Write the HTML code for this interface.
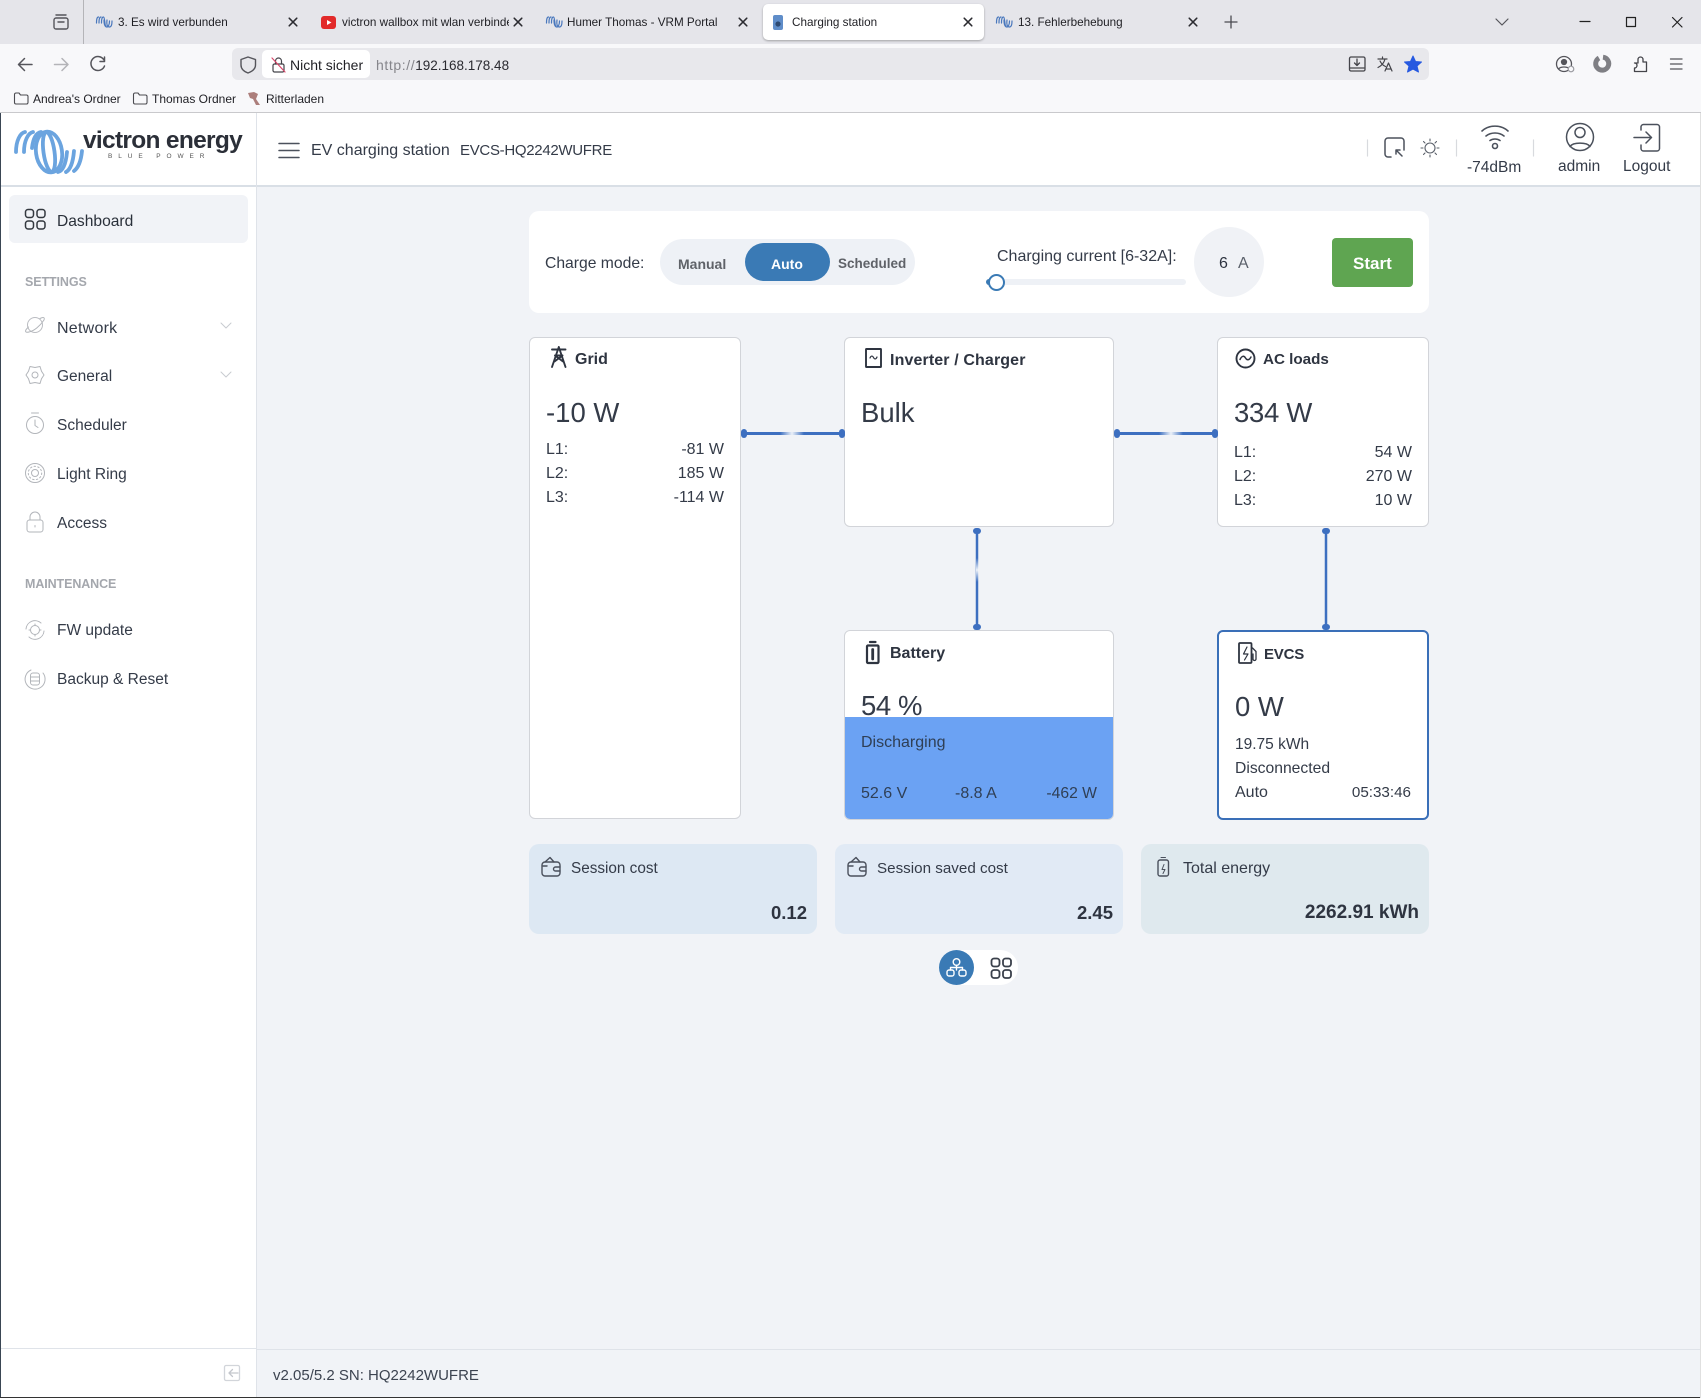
<!DOCTYPE html>
<html lang="de"><head><meta charset="utf-8"><title>Charging station</title>
<style>
*{box-sizing:border-box}
html,body{margin:0;padding:0;width:1701px;height:1398px;overflow:hidden;background:#f1f3f7;font-family:"Liberation Sans",sans-serif;color:#343b48}
.b{position:absolute}
.t{position:absolute;white-space:nowrap;line-height:20px;margin-top:-9px;font-size:16px}
.r{text-align:right}
.tab{font-size:11.7px;color:#1f1f24}
.bm{font-size:12px;color:#1f1f24}
.card{position:absolute;background:#fff;border:1px solid #d2d4d9;border-radius:6px}
.ttl{font-weight:700;color:#2e3440}
.big{font-size:27.5px;line-height:36px;margin-top:-17px;color:#343b48}
.sec{font-size:12.5px;font-weight:700;color:#a4a7ad}
svg{position:absolute;left:0;top:0;overflow:visible}
</style></head><body>

<!-- browser chrome -->
<div class="b" style="left:0;top:0;width:1701px;height:44px;background:#e5e5ea"></div>
<div class="b" style="left:0;top:44px;width:1701px;height:68px;background:#f8f8fa"></div>
<div class="b" style="left:0;top:112px;width:1701px;height:1px;background:#c9c9cc"></div>
<div class="b" style="left:83px;top:0;width:1px;height:44px;background:#b4b4b8"></div>
<div class="b" style="left:763px;top:4px;width:221px;height:36px;background:#fff;border-radius:5px;box-shadow:0 1px 2px rgba(0,0,0,.3)"></div>
<div class="b" style="left:232px;top:48px;width:1197px;height:32px;background:#e8e8ec;border-radius:6px"></div>
<div class="b" style="left:262px;top:50px;width:108px;height:28px;background:#fff;border-radius:5px"></div>

<div class="t tab" style="left:118px;top:22px">3. Es wird verbunden</div>
<div class="t tab" style="left:342px;top:22px;width:167px;overflow:hidden">victron wallbox mit wlan verbinden</div>
<div class="t tab" style="left:567px;top:22px">Humer Thomas - VRM Portal</div>
<div class="t tab" style="left:792px;top:22px">Charging station</div>
<div class="t tab" style="left:1018px;top:22px">13. Fehlerbehebung</div>
<div class="t" style="left:290px;top:64px;font-size:14px;color:#1f1f24">Nicht sicher</div>
<div class="t" style="left:376px;top:64px;font-size:14px;color:#85858b"><span style="letter-spacing:.6px">http://</span><span style="color:#2a2a30;font-size:13.5px">192.168.178.48</span></div>
<div class="t bm" style="left:33px;top:98px">Andrea's Ordner</div>
<div class="t bm" style="left:152px;top:98px">Thomas Ordner</div>
<div class="t bm" style="left:266px;top:98px">Ritterladen</div>

<!-- page frame -->
<div class="b" style="left:0;top:113px;width:256px;height:1285px;background:#fff"></div>
<div class="b" style="left:0;top:113px;width:1701px;height:72px;background:#fff"></div>
<div class="b" style="left:0;top:185px;width:1701px;height:2px;background:#d9dfe6"></div>
<div class="b" style="left:256px;top:113px;width:1px;height:1285px;background:#dfe3e9"></div>
<div class="b" style="left:0;top:1348px;width:256px;height:1px;background:#dfe3e9"></div>
<div class="b" style="left:257px;top:1349px;width:1444px;height:1px;background:#dfe3e9"></div>
<div class="b" style="left:0;top:113px;width:1px;height:1285px;background:#3a4654"></div>
<div class="b" style="left:0;top:1397px;width:1701px;height:1px;background:#333"></div>
<div class="b" style="left:1700px;top:113px;width:1px;height:1285px;background:#e0e0e0"></div>

<!-- logo text -->
<div class="t" style="left:83px;top:141px;font-size:24.5px;font-weight:700;color:#2b2f38;letter-spacing:-.7px;line-height:28px;margin-top:-14px">victron energy</div>
<div class="t" style="left:108px;top:157px;font-size:6.5px;line-height:8px;margin-top:-4px;letter-spacing:5.9px;color:#555">BLUE POWER</div>

<!-- header text -->
<div class="t" style="left:311px;top:150px">EV charging station</div>
<div class="t" style="left:460px;top:150px;font-size:15px;letter-spacing:-.3px">EVCS-HQ2242WUFRE</div>
<div class="t" style="left:1467px;top:167px;font-size:15.5px">-74dBm</div>
<div class="t" style="left:1558px;top:166px;font-size:15.5px">admin</div>
<div class="t" style="left:1623px;top:166px;font-size:15.5px">Logout</div>

<!-- sidebar -->
<div class="b" style="left:9px;top:195px;width:239px;height:48px;background:#f1f3f7;border-radius:6px"></div>
<div class="t" style="left:57px;top:221px;color:#2a303a;font-size:15.6px">Dashboard</div>
<div class="t sec" style="left:25px;top:281px;letter-spacing:-.1px">SETTINGS</div>
<div class="t" style="left:57px;top:327.500px;letter-spacing:.25px">Network</div>
<div class="t" style="left:57px;top:376px;font-size:15.500px">General</div>
<div class="t" style="left:57px;top:425px;font-size:15.500px">Scheduler</div>
<div class="t" style="left:57px;top:474px;font-size:15.500px">Light Ring</div>
<div class="t" style="left:57px;top:522.500px;font-size:15.500px">Access</div>
<div class="t sec" style="left:25px;top:583px;letter-spacing:-.1px">MAINTENANCE</div>
<div class="t" style="left:57px;top:630px;font-size:15.500px">FW update</div>
<div class="t" style="left:57px;top:679px;font-size:15.500px">Backup &amp; Reset</div>

<!-- top panel -->
<div class="b" style="left:529px;top:211px;width:900px;height:102px;background:#fff;border-radius:10px"></div>
<div class="t" style="left:545px;top:263px;font-size:15.700px">Charge mode:</div>
<div class="b" style="left:660px;top:239px;width:255px;height:46px;background:#eef1f6;border-radius:23px"></div>
<div class="b" style="left:745px;top:243px;width:85px;height:38px;background:#3a7ab5;border-radius:19px"></div>
<div class="t" style="left:678px;top:263px;font-size:14px;font-weight:700;color:#5f6268">Manual</div>
<div class="t" style="left:771px;top:263px;font-size:14px;font-weight:700;color:#fff">Auto</div>
<div class="t" style="left:838px;top:263px;font-size:13.500px;font-weight:700;color:#5f6268">Scheduled</div>
<div class="t" style="left:997px;top:256px">Charging current [6-32A]:</div>
<div class="b" style="left:986px;top:279px;width:200px;height:6px;background:#eef1f6;border-radius:3px"></div>
<div class="b" style="left:986px;top:279px;width:10px;height:6px;background:#3a7ab5;border-radius:3px"></div>
<div class="b" style="left:988px;top:274px;width:17px;height:17px;background:#fff;border:2.5px solid #3a7ab5;border-radius:50%"></div>
<div class="b" style="left:1194px;top:227px;width:70px;height:70px;background:#f0f2f6;border-radius:50%"></div>
<div class="t" style="left:1219px;top:263px;color:#2e3440">6</div>
<div class="t" style="left:1238px;top:263px;color:#5a606a">A</div>
<div class="b" style="left:1332px;top:238px;width:81px;height:49px;background:#5fa551;border-radius:4px"></div>
<div class="t" style="left:1353px;top:263px;font-size:17px;font-weight:700;color:#fff">Start</div>

<!-- flow cards -->
<div class="card" style="left:529px;top:337px;width:212px;height:482px"></div>
<div class="t ttl" style="left:575px;top:359px">Grid</div>
<div class="t big" style="left:546px;top:412px">-10 W</div>
<div class="t" style="left:546px;top:449px">L1:</div><div class="t r" style="right:977px;top:449px">-81 W</div>
<div class="t" style="left:546px;top:473px">L2:</div><div class="t r" style="right:977px;top:473px">185 W</div>
<div class="t" style="left:546px;top:497px">L3:</div><div class="t r" style="right:977px;top:497px">-114 W</div>

<div class="card" style="left:844px;top:337px;width:270px;height:190px"></div>
<div class="t ttl" style="left:890px;top:360px;letter-spacing:.12px">Inverter / Charger</div>
<div class="t big" style="left:861px;top:412px">Bulk</div>

<div class="card" style="left:1217px;top:337px;width:212px;height:190px"></div>
<div class="t ttl" style="left:1263px;top:359px;font-size:15.200px">AC loads</div>
<div class="t big" style="left:1234px;top:412px;letter-spacing:-.3px">334 W</div>
<div class="t" style="left:1234px;top:452px">L1:</div><div class="t r" style="right:289px;top:452px">54 W</div>
<div class="t" style="left:1234px;top:476px">L2:</div><div class="t r" style="right:289px;top:476px">270 W</div>
<div class="t" style="left:1234px;top:500px">L3:</div><div class="t r" style="right:289px;top:500px">10 W</div>

<div class="card" style="left:844px;top:630px;width:270px;height:190px;overflow:hidden"><div class="b" style="left:0;top:86px;width:268px;height:103px;background:#6ba2f3"></div></div>
<div class="t ttl" style="left:890px;top:653px">Battery</div>
<div class="t big" style="left:861px;top:705px;letter-spacing:-.4px">54 %</div>
<div class="t" style="left:861px;top:742px;color:#2f3f55">Discharging</div>
<div class="t" style="left:861px;top:793px;color:#2f3f55">52.6 V</div>
<div class="t" style="left:955px;top:793px;color:#2f3f55">-8.8 A</div>
<div class="t r" style="right:604px;top:793px;color:#2f3f55;font-size:15.700px">-462 W</div>

<div class="card" style="left:1217px;top:630px;width:212px;height:190px;border:2px solid #3a6fb8"></div>
<div class="t ttl" style="left:1264px;top:654px;font-size:15px;letter-spacing:-.2px">EVCS</div>
<div class="t big" style="left:1235px;top:706px">0 W</div>
<div class="t" style="left:1235px;top:744px;font-size:15.500px">19.75 kWh</div>
<div class="t" style="left:1235px;top:768px;font-size:15.700px">Disconnected</div>
<div class="t" style="left:1235px;top:792px">Auto</div>
<div class="t r" style="right:290px;top:792px;font-size:15.200px">05:33:46</div>

<!-- stat cards -->
<div class="b" style="left:529px;top:844px;width:288px;height:90px;background:#dde8f3;border-radius:10px"></div>
<div class="b" style="left:835px;top:844px;width:288px;height:90px;background:#e1eaf5;border-radius:10px"></div>
<div class="b" style="left:1141px;top:844px;width:288px;height:90px;background:#dfe9ee;border-radius:10px"></div>
<div class="t" style="left:571px;top:868px;font-size:15.300px">Session cost</div>
<div class="t" style="left:877px;top:868px;font-size:15.200px">Session saved cost</div>
<div class="t" style="left:1183px;top:868px">Total energy</div>
<div class="t r" style="right:894px;top:912px;font-size:18.500px;font-weight:700;color:#2e3440">0.12</div>
<div class="t r" style="right:588px;top:912px;font-size:18.500px;font-weight:700;color:#2e3440">2.45</div>
<div class="t r" style="right:282px;top:912px;font-size:19px;font-weight:700;color:#2e3440">2262.91 kWh</div>

<!-- toggle -->
<div class="b" style="left:939px;top:950px;width:79px;height:35px;background:#fff;border-radius:18px"></div>
<div class="b" style="left:939px;top:950px;width:35px;height:35px;background:#3a7ab5;border-radius:50%"></div>

<div class="t" style="left:273px;top:1375px;color:#3c4350;font-size:15px">v2.05/5.2 SN: HQ2242WUFRE</div>

<!-- all icons, in page coordinates -->
<svg width="1701" height="1398" viewBox="0 0 1701 1398" fill="none" stroke-linecap="round" stroke-linejoin="round">
<defs>
<g id="fav" stroke="#4a78bd" stroke-width="1.200"><path d="M.5 8C.5 4 1 2 2.500 2M3 8C3 4 3.500 2 5 2M5.500 8C5.500 4 6 2 7.500 2C9 2 8.500 11 10 11M8 5C8 9 9 12 11 12C12 12 13.500 10 13.500 6M11 5C10.500 9 11 12 13.500 12 15 12 16 10 16 6"/></g>
<path id="x" d="M-3.800-3.800L3.800 3.800M3.800-3.800L-3.800 3.800" stroke="#2b2b30" stroke-width="1.500"/>
<g id="folder" stroke="#4b4b50" stroke-width="1.100"><path d="M.5 2.500A1.500 1.500 0 0 1 2 1H5L6.500 3H12.500A1.500 1.500 0 0 1 14 4.500V10.500A1.500 1.500 0 0 1 12.500 12H2A1.500 1.500 0 0 1 .5 10.500Z"/></g>
<g id="quad"><rect x="0" y="0" width="8" height="8" rx="2.600"/><rect x="11.500" y="0" width="8" height="8" rx="2.600"/><rect x="0" y="11.500" width="8" height="8" rx="2.600"/><rect x="11.500" y="11.500" width="8" height="8" rx="2.600"/></g>
<g id="wallet" stroke="#4a505c" stroke-width="1.400"><rect x="1" y="6" width="18" height="14" rx="3"/><path d="M4 6L9 1.500 13 6M2 10H6"/><path d="M19 11H14.500A2 2 0 0 0 14.500 15H19"/></g>
<linearGradient id="gh" gradientUnits="objectBoundingBox" x1="0" x2="1" y1="0" y2="0"><stop offset="0" stop-color="#fff" stop-opacity="0"/><stop offset=".5" stop-color="#fff" stop-opacity=".9"/><stop offset="1" stop-color="#fff" stop-opacity="0"/></linearGradient>
<linearGradient id="gv" x1="0" x2="0" y1="0" y2="1"><stop offset="0" stop-color="#fff" stop-opacity="0"/><stop offset=".5" stop-color="#fff" stop-opacity=".9"/><stop offset="1" stop-color="#fff" stop-opacity="0"/></linearGradient>
</defs>

<!-- tab icons -->
<use href="#fav" x="96" y="15"/><use href="#fav" x="546" y="15"/><use href="#fav" x="996" y="15"/>
<rect x="321" y="16" width="15" height="13" rx="3" fill="#e22a2a"/><path d="M327 20L331.500 22.500 327 25Z" fill="#fff"/>
<rect x="773" y="15" width="10" height="15" rx="2" fill="#5f8dc9"/><circle cx="778" cy="24" r="2.600" fill="#2e4a72"/>
<use href="#x" x="293" y="22"/><use href="#x" x="518" y="22"/><use href="#x" x="743" y="22"/><use href="#x" x="968" y="22"/><use href="#x" x="1193" y="22"/>
<path d="M1231 16V28M1225 22H1237" stroke="#4a4a50" stroke-width="1.300"/>
<path d="M1496 19L1502 25 1508 19" stroke="#55555b" stroke-width="1.200"/>
<path d="M1580 21.500H1590" stroke="#222" stroke-width="1.200"/>
<rect x="1626.500" y="17.500" width="9" height="9" stroke="#222" stroke-width="1.200"/>
<path d="M1672.500 17.500L1682 27M1682 17.500L1672.500 27" stroke="#222" stroke-width="1.200"/>
<g stroke="#55555b" stroke-width="1.400"><rect x="54" y="18" width="14" height="11" rx="2"/><path d="M56 15H66M58 22H64"/></g>

<!-- toolbar icons -->
<path d="M32 64.500H18.500M24.500 58.500L18.500 64.500 24.500 70.500" stroke="#55555b" stroke-width="1.500"/>
<path d="M68 64.500H54.500M62 58.500L68 64.500 62 70.500" stroke="#b4b4b8" stroke-width="1.500"/>
<path d="M104 60A7 7 0 1 0 104.500 66M104.500 57V61.500H100" stroke="#55555b" stroke-width="1.500"/>
<path d="M248 57L255.500 59.500V65C255.500 69 252 71.500 248 73 244 71.500 241 69 241 65V59.500Z" stroke="#55555b" stroke-width="1.400"/>
<g stroke-width="1.200"><rect x="273" y="64" width="11" height="8" rx="1.500" stroke="#44444a"/><path d="M275.500 64V61A3 3 0 0 1 281.500 61V64" stroke="#44444a"/><path d="M272 58L285 72" stroke="#d8476a"/></g>
<use href="#folder" x="14" y="92"/><use href="#folder" x="133" y="92"/>
<path d="M248 93L254 92 258 94 256 99 260 105H256L253 99 250 98Z" fill="#8c4a44" opacity=".7"/>

<g stroke="#44444a" stroke-width="1.300"><rect x="1349.500" y="57" width="15.500" height="14" rx="1.500"/><path d="M1357 59V65M1354.500 63L1357 65.500 1359.500 63M1350 68H1364"/></g>
<g stroke="#44444a" stroke-width="1.200"><path d="M1378 59H1387M1382.500 57V59M1385 59C1384 63 1381 66 1378 67.500M1380 61C1381.500 64 1383 65.500 1385.500 66.500"/><path d="M1385 71L1388.500 63 1392 71M1386 69H1391"/></g>
<path d="M1413 56L1415.500 61.500 1421.500 62 1417 66 1418.500 72 1413 69 1407.500 72 1409 66 1404.500 62 1410.500 61.500Z" fill="#2659e0" stroke="#2659e0" stroke-width="1"/>
<g stroke="#55555b" stroke-width="1.300"><circle cx="1564" cy="64" r="7.500"/><circle cx="1564" cy="62" r="2.500" fill="#55555b"/><path d="M1559 68.500C1561 66.500 1567 66.500 1569 68.500"/></g>
<circle cx="1571" cy="69" r="2.800" fill="#f8f8fa" stroke="#9a9aa0" stroke-width="1.200"/>
<path d="M1603 57.200A6.500 6.500 0 1 1 1599 58" stroke="#7f7f84" stroke-width="5" stroke-linecap="butt"/>
<path d="M1634.500 63H1638L1638 59.500A2.500 2.500 0 0 1 1643 59.500V62H1646.500V71.500H1634.500V68A2.500 2.500 0 0 0 1634.500 63Z" stroke="#44444a" stroke-width="1.300"/>
<path d="M1670.500 59H1682M1670.500 64H1682M1670.500 69H1682" stroke="#55555b" stroke-width="1.300"/>

<!-- logo swirl -->
<g stroke="#6ba4df" stroke-width="3.800" stroke-linecap="round">
<path d="M16 152C16 141 20 133 25 132"/>
<path d="M24 152C24 141 28 133 33 132"/>
<path d="M32 148C33 139 36 133 41 132"/>
<ellipse cx="49" cy="152" rx="13" ry="20.500" transform="rotate(-8 49 152)"/>
<ellipse cx="49" cy="152" rx="5.500" ry="20" transform="rotate(-8 49 152)"/>
<path d="M58 172C63 171 66 163 67 152"/>
<path d="M66 172C70 170 73 163 74 151"/>
<path d="M74 171C78 168 81 161 82 151"/>
</g>

<!-- header icons -->
<path d="M279 143.500H299M279 150.500H299M279 157.500H299" stroke="#4b515c" stroke-width="1.500"/>
<path d="M1367.500 140V156M1456.500 140V156M1533.500 140V156" stroke="#d8dade" stroke-width="1.200"/>
<g stroke="#4b515c" stroke-width="1.500"><path d="M1391 157H1388A3 3 0 0 1 1385 154V141A3 3 0 0 1 1388 138H1401A3 3 0 0 1 1404 141V150"/><path d="M1396 150L1402 156M1396 150V154M1396 150H1400"/></g>
<g stroke="#5a606a" stroke-width="1.100"><circle cx="1430" cy="148" r="5"/><path d="M1430 139V141M1430 155V157M1421 148H1423M1437 148H1439M1423.500 141.500L1425 143M1435 153L1436.500 154.500M1423.500 154.500L1425 153M1435 143L1436.500 141.500"/></g>
<g stroke="#4b515c" stroke-width="1.600"><path d="M1482 131C1489 124.500 1501 124.500 1508 131M1486 136C1491 132 1499 132 1504 136M1490 140.500C1493 138.500 1497 138.500 1500 140.500"/><circle cx="1495" cy="146" r="2.500"/></g>
<g stroke="#4b515c" stroke-width="1.500"><circle cx="1580" cy="137" r="13.500"/><circle cx="1580" cy="132.500" r="5"/><path d="M1570 146.500C1573 142 1587 142 1590 146.500"/></g>
<g stroke="#4b515c" stroke-width="1.500"><path d="M1641 130V127A2.500 2.500 0 0 1 1643.500 124.500H1657A2.500 2.500 0 0 1 1659.500 127V148.500A2.500 2.500 0 0 1 1657 151H1643.500A2.500 2.500 0 0 1 1641 148.500V145"/><path d="M1634 137.500H1651M1646 132L1651.500 137.500 1646 143"/></g>

<!-- sidebar icons -->
<use href="#quad" x="25.500" y="209.500" stroke="#33383f" stroke-width="1.500"/>
<g stroke="#b2b5ba" stroke-width="1">
<ellipse cx="35" cy="325" rx="7.500" ry="7.500" opacity=".9"/><path d="M28.500 327C24 331 25 333 29 332 34 331 40 326 44 320 45 317 43 317 40 318.500"/>
<path d="M221 323L226 328 231 323" stroke="#c8cbd0"/>
<path d="M221 372L226 377 231 372" stroke="#c8cbd0"/>
<path d="M44 375L41.500 378.750 40 383.500 35 382.500 30 383.500 28.500 378.750 26 375 28.500 371.250 30 366.500 35 367.500 40 366.500 41.500 371.250Z"/><circle cx="35" cy="375" r="3"/>
<circle cx="35" cy="425" r="8.500"/><path d="M35 420V425.500L38 427.500M31.500 413H38.500"/>
<circle cx="35" cy="473" r="9.500"/><circle cx="35" cy="473" r="3.500"/><circle cx="35" cy="473" r="6.700" stroke-dasharray="1.500 2.300"/>
<rect x="27" y="520" width="16" height="12" rx="2.500"/><path d="M30 520V517A5 5 0 0 1 40 517V520M35 525.500V527"/>
<path d="M26 629A9 9 0 0 1 41 623M44 631A9 9 0 0 1 29 637"/><circle cx="35" cy="630" r="4.500"/><path d="M35 624V625.500M35 634.500V636M29 630H30.500M39.500 630H41"/>
<path d="M43 673A10 10 0 1 1 31 670"/><rect x="30.500" y="673" width="9" height="12" rx="2.500"/><path d="M30.500 677H39.500M30.500 681H39.500"/>
</g>
<g stroke="#d2d5da" stroke-width="1.300"><rect x="224.500" y="1365.500" width="15" height="15" rx="1.500"/><path d="M238 1373H229M232.500 1369.500L229 1373 232.500 1376.500" stroke="#c3c6cc"/></g>

<!-- connectors -->
<g stroke="#3d6fc0" stroke-width="3" stroke-linecap="butt">
<path d="M745 433.500H840M1118 433.500H1214"/>
<path d="M977 530V627M1326 530V627" stroke-width="2.500"/>
</g>
<g fill="#3d6fc0">
<rect x="741" y="429" width="6" height="9" rx="3"/><rect x="839" y="429" width="6" height="9" rx="3"/>
<rect x="1114" y="429" width="6" height="9" rx="3"/><rect x="1212" y="429" width="6" height="9" rx="3"/>
<rect x="973" y="528" width="8" height="6" rx="3"/><rect x="973" y="624" width="8" height="6" rx="3"/>
<rect x="1322" y="528" width="8" height="6" rx="3"/><rect x="1322" y="624" width="8" height="6" rx="3"/>
</g>
<rect x="780" y="432" width="24" height="3" fill="url(#gh)"/>
<rect x="1159" y="432" width="24" height="3" fill="url(#gh)"/>
<rect x="976" y="558" width="2.500" height="24" fill="url(#gv)"/>

<!-- card icons -->
<g stroke="#2e3440" stroke-width="1.900"><path d="M552 349.500H565.500M558.800 347L552 367M558.800 347L565.500 367M555 355.500H562.500M554.500 361.500L562.500 355.500M563 361.500L555 355.500"/></g>
<g stroke="#2e3440" stroke-width="1.900"><rect x="866" y="349" width="15" height="18" rx=".5"/><path d="M870 358C871 355.500 872.500 355.500 873.500 357.500 874.500 359.500 876 359.500 877 357" stroke-width="1.200"/></g>
<g stroke="#2e3440" stroke-width="1.900"><circle cx="1245.500" cy="358.500" r="9"/><path d="M1240 359.500C1242 355.500 1244 355.500 1245.500 358 1247 360.500 1249 360.500 1251 357" stroke-width="1.500"/></g>
<g stroke="#2e3440" stroke-width="2.200"><rect x="867" y="645.500" width="11.500" height="17.500" rx="1"/><path d="M870 642H875.500"/><path d="M872.700 649.500V659" stroke-width="2.800"/></g>
<g stroke="#2e3440" stroke-width="1.800"><rect x="1239" y="643" width="12.500" height="20" rx="1"/><path d="M1247 647L1243.500 654H1248L1244.500 660" stroke-width="1.200"/><path d="M1252.500 648L1256 651.500V659A1.500 1.500 0 0 1 1253 659V654" stroke-width="1.300"/></g>

<use href="#wallet" x="541" y="856"/><use href="#wallet" x="847" y="856"/>
<g stroke="#4a505c" stroke-width="1.400"><rect x="1158" y="860" width="10.500" height="16" rx="2"/><path d="M1161 857.500H1165.500M1164 864.500L1162 869.500H1165L1163 873.500" stroke-width="1"/></g>

<!-- toggle icons -->
<g stroke="#fff" stroke-width="1.400"><circle cx="956.500" cy="962" r="3.300"/><rect x="947" y="970" width="7" height="6" rx="2"/><rect x="959" y="970" width="7" height="6" rx="2"/><path d="M956.500 965.500V970M950.500 970V967.500H962.500V970"/></g>
<use href="#quad" x="991.500" y="958.500" stroke="#3a404b" stroke-width="1.800"/>
</svg>
</body></html>
